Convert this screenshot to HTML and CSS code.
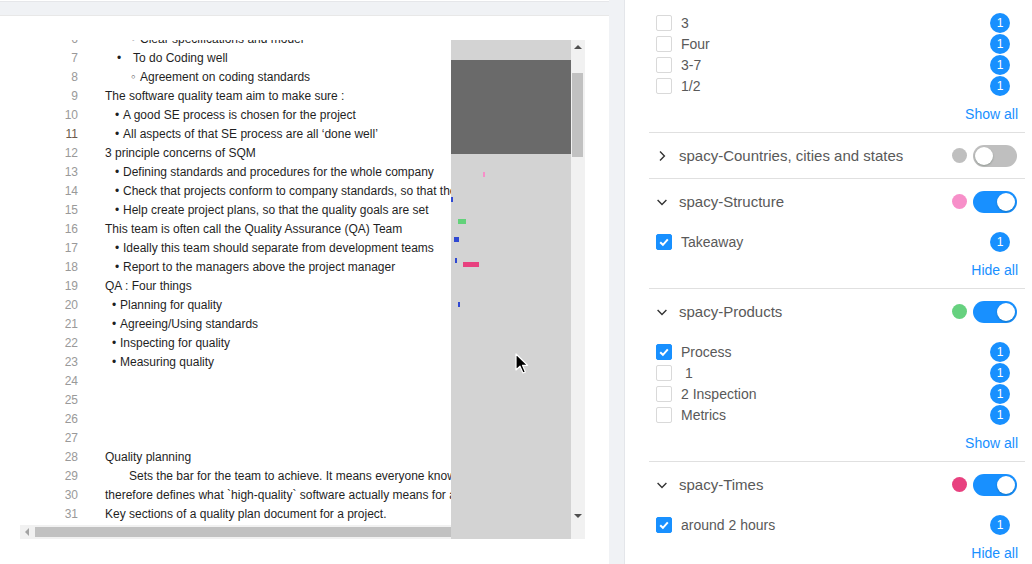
FILE: index.html
```html
<!DOCTYPE html>
<html lang="en">
<head>
<meta charset="utf-8">
<title>Annotation editor</title>
<link rel="stylesheet" href="styles.css">
</head>
<body>
<div class="page">
  <div class="left">
    <div class="topcard"></div>
    <div class="card">
      <div class="editor">
        <div class="code">
          <div class="lines">
            <div class="ln"><span class="no">6</span><span class="tx in-c"><span class="bl circ">◦</span>Clear specifications and model</span></div>
            <div class="ln"><span class="no">7</span><span class="tx in-a"><span class="bl wide">•</span>To do Coding well</span></div>
            <div class="ln"><span class="no">8</span><span class="tx in-c"><span class="bl circ">◦</span>Agreement on coding standards</span></div>
            <div class="ln"><span class="no">9</span><span class="tx">The software quality team aim to make sure :</span></div>
            <div class="ln"><span class="no">10</span><span class="tx in-b"><span class="bl">•</span>A good SE process is chosen for the project</span></div>
            <div class="ln"><span class="no active">11</span><span class="tx in-b"><span class="bl">•</span>All aspects of that SE process are all ‘done well’</span></div>
            <div class="ln"><span class="no">12</span><span class="tx">3 principle concerns of SQM</span></div>
            <div class="ln"><span class="no">13</span><span class="tx in-b"><span class="bl">•</span>Defining standards and procedures for the whole company</span></div>
            <div class="ln"><span class="no">14</span><span class="tx in-b"><span class="bl">•</span>Check that projects conform to company standards, so that the quality is consistent</span></div>
            <div class="ln"><span class="no">15</span><span class="tx in-b"><span class="bl">•</span>Help create project plans, so that the quality goals are set</span></div>
            <div class="ln"><span class="no">16</span><span class="tx">This team is often call the Quality Assurance (QA) Team</span></div>
            <div class="ln"><span class="no">17</span><span class="tx in-b"><span class="bl">•</span>Ideally this team should separate from development teams</span></div>
            <div class="ln"><span class="no">18</span><span class="tx in-b"><span class="bl">•</span>Report to the managers above the project manager</span></div>
            <div class="ln"><span class="no">19</span><span class="tx">QA : Four things</span></div>
            <div class="ln"><span class="no">20</span><span class="tx in-d"><span class="bl">•</span>Planning for quality</span></div>
            <div class="ln"><span class="no">21</span><span class="tx in-d"><span class="bl">•</span>Agreeing/Using standards</span></div>
            <div class="ln"><span class="no">22</span><span class="tx in-d"><span class="bl">•</span>Inspecting for quality</span></div>
            <div class="ln"><span class="no">23</span><span class="tx in-d"><span class="bl">•</span>Measuring quality</span></div>
            <div class="ln"><span class="no">24</span><span class="tx"></span></div>
            <div class="ln"><span class="no">25</span><span class="tx"></span></div>
            <div class="ln"><span class="no">26</span><span class="tx"></span></div>
            <div class="ln"><span class="no">27</span><span class="tx"></span></div>
            <div class="ln"><span class="no">28</span><span class="tx">Quality planning</span></div>
            <div class="ln"><span class="no">29</span><span class="tx in-e">Sets the bar for the team to achieve. It means everyone knows what quality means and</span></div>
            <div class="ln"><span class="no">30</span><span class="tx">therefore defines what `high-quality` software actually means for a project.</span></div>
            <div class="ln"><span class="no">31</span><span class="tx">Key sections of a quality plan document for a project.</span></div>
            <div class="ln"><span class="no">32</span><span class="tx"></span></div>
          </div>
        </div>
        <div class="minimap">
          <div class="mm-view"></div>
          <span class="mark pink" style="left:32px;top:132px;width:2px;height:5px"></span>
          <span class="mark blue" style="left:0px;top:157px;width:2px;height:5px"></span>
          <span class="mark green" style="left:7px;top:179px;width:8px;height:5px"></span>
          <span class="mark blue" style="left:3px;top:197px;width:5px;height:5px"></span>
          <span class="mark blue" style="left:4px;top:218px;width:2px;height:5px"></span>
          <span class="mark red" style="left:12px;top:222px;width:16px;height:5px"></span>
          <span class="mark blue" style="left:7px;top:262px;width:2px;height:5px"></span>
        </div>
        <div class="vscroll">
          <span class="arr-box"><span class="arr up"></span></span>
          <div class="vthumb"></div>
          <span class="arr-box bottom"><span class="arr down"></span></span>
        </div>
        <div class="hscroll">
          <span class="arr-box h"><span class="arr lft"></span></span>
          <div class="hthumb"></div>
        </div>
        <div class="corner"></div>
      </div>
      <svg class="pointer" width="14" height="22" viewBox="0 0 14 22"><path d="M1 1 L1 17 L5 13.2 L8 20 L10.4 19 L7.5 12.3 L12.6 12.3 Z" fill="#000" stroke="#fff" stroke-width="1.2" stroke-linejoin="round"/></svg>
    </div>
  </div>

  <aside class="panel">
    <section class="facet">
      <ul class="items">
        <li class="item"><span class="cb"></span><span class="lbl">3</span><span class="badge">1</span></li>
        <li class="item"><span class="cb"></span><span class="lbl">Four</span><span class="badge">1</span></li>
        <li class="item"><span class="cb"></span><span class="lbl">3-7</span><span class="badge">1</span></li>
        <li class="item"><span class="cb"></span><span class="lbl">1/2</span><span class="badge">1</span></li>
      </ul>
      <div class="more">Show all</div>
    </section>

    <section class="facet">
      <div class="fhead">
        <svg class="chev" width="12" height="12" viewBox="0 0 12 12"><path d="M4 1.6 L8.4 6 L4 10.4" fill="none" stroke="#333" stroke-width="1.4"/></svg>
        <span class="ftitle">spacy-Countries, cities and states</span>
        <span class="dot c-gray"></span>
        <span class="tog off"><i></i></span>
      </div>
    </section>

    <section class="facet">
      <div class="fhead">
        <svg class="chev" width="12" height="12" viewBox="0 0 12 12"><path d="M1.6 4 L6 8.4 L10.4 4" fill="none" stroke="#333" stroke-width="1.4"/></svg>
        <span class="ftitle">spacy-Structure</span>
        <span class="dot c-pink"></span>
        <span class="tog on"><i></i></span>
      </div>
      <ul class="items">
        <li class="item"><span class="cb on"><svg width="14" height="14" viewBox="0 0 14 14"><path d="M3.2 7.2 L5.9 9.8 L10.8 4.4" fill="none" stroke="#fff" stroke-width="2"/></svg></span><span class="lbl">Takeaway</span><span class="badge">1</span></li>
      </ul>
      <div class="more">Hide all</div>
    </section>

    <section class="facet">
      <div class="fhead">
        <svg class="chev" width="12" height="12" viewBox="0 0 12 12"><path d="M1.6 4 L6 8.4 L10.4 4" fill="none" stroke="#333" stroke-width="1.4"/></svg>
        <span class="ftitle">spacy-Products</span>
        <span class="dot c-green"></span>
        <span class="tog on"><i></i></span>
      </div>
      <ul class="items">
        <li class="item"><span class="cb on"><svg width="14" height="14" viewBox="0 0 14 14"><path d="M3.2 7.2 L5.9 9.8 L10.8 4.4" fill="none" stroke="#fff" stroke-width="2"/></svg></span><span class="lbl">Process</span><span class="badge">1</span></li>
        <li class="item"><span class="cb"></span><span class="lbl">&nbsp;1</span><span class="badge">1</span></li>
        <li class="item"><span class="cb"></span><span class="lbl">2 Inspection</span><span class="badge">1</span></li>
        <li class="item"><span class="cb"></span><span class="lbl">Metrics</span><span class="badge">1</span></li>
      </ul>
      <div class="more">Show all</div>
    </section>

    <section class="facet">
      <div class="fhead">
        <svg class="chev" width="12" height="12" viewBox="0 0 12 12"><path d="M1.6 4 L6 8.4 L10.4 4" fill="none" stroke="#333" stroke-width="1.4"/></svg>
        <span class="ftitle">spacy-Times</span>
        <span class="dot c-red"></span>
        <span class="tog on"><i></i></span>
      </div>
      <ul class="items">
        <li class="item"><span class="cb on"><svg width="14" height="14" viewBox="0 0 14 14"><path d="M3.2 7.2 L5.9 9.8 L10.8 4.4" fill="none" stroke="#fff" stroke-width="2"/></svg></span><span class="lbl">around 2 hours</span><span class="badge">1</span></li>
      </ul>
      <div class="more">Hide all</div>
    </section>
  </aside>
</div>
</body>
</html>
```

FILE: styles.css
```css
* { box-sizing: border-box; }
html, body { margin: 0; padding: 0; }
body {
  background: #f0f2f5;
  font-family: "Liberation Sans", Arial, sans-serif;
  width: 1032px;
  height: 564px;
  overflow: hidden;
}
.page {
  display: flex;
  height: 564px;
}
.left {
  width: 609px;
  margin-right: 15px;
  display: flex;
  flex-direction: column;
}
.topcard {
  height: 2px;
  background: #fff;
  border-bottom: 1px solid #e6e7ea;
  margin-bottom: 13px;
}
.card {
  flex: 1;
  background: #fff;
  border-top: 1px solid #e8e8e8;
  padding: 24px 0 0 20px;
  position: relative;
}
.editor {
  display: grid;
  grid-template-columns: 431px 120px 14px;
  grid-template-rows: 485px 14px;
  width: 565px;
}
.code {
  grid-column: 1;
  grid-row: 1;
  overflow: hidden;
  background: #fff;
}
.lines {
  margin-top: -10px;
  font-size: 12px;
  line-height: 19px;
  color: #1f1f1f;
}
.ln {
  display: flex;
  height: 19px;
  white-space: pre;
}
.no {
  width: 58px;
  flex: none;
  text-align: right;
  color: #999;
}
.no.active { color: #6b5b4b; }
.tx { margin-left: 27px; }
.in-a { padding-left: 12px; }
.in-b { padding-left: 10px; }
.in-c { padding-left: 25px; }
.in-d { padding-left: 7px; }
.in-e { padding-left: 24px; }
.bl {
  display: inline-block;
  width: 8px;
}
.bl.wide { width: 16px; }
.bl.circ {
  width: 10px;
  font-size: 11px;
  font-family: "DejaVu Sans", sans-serif;
  color: #111;
}

.minimap {
  grid-column: 2;
  grid-row: 1 / span 2;
  background: #d3d3d3;
  position: relative;
}
.mm-view {
  margin-top: 20px;
  height: 94px;
  background: #6a6a6a;
}
.mark { position: absolute; display: block; }
.mark.pink { background: #f78fc9; }
.mark.blue { background: #2f48d2; }
.mark.green { background: #62d27a; }
.mark.red { background: #e8417f; }

.vscroll {
  grid-column: 3;
  grid-row: 1;
  background: #f1f1f1;
  display: flex;
  flex-direction: column;
}
.arr-box {
  height: 14px;
  width: 14px;
  display: flex;
  align-items: center;
  justify-content: center;
  flex: none;
}
.arr-box.bottom { margin-top: auto; margin-bottom: 2px; }
.arr { width: 0; height: 0; display: block; }
.arr.up {
  border-left: 4px solid transparent;
  border-right: 4px solid transparent;
  border-bottom: 4px solid #505050;
}
.arr.down {
  border-left: 4px solid transparent;
  border-right: 4px solid transparent;
  border-top: 4px solid #505050;
}
.arr.lft {
  border-top: 4px solid transparent;
  border-bottom: 4px solid transparent;
  border-right: 4px solid #a3a3a3;
}
.vthumb {
  margin: 19px 0 0 1px;
  width: 11px;
  height: 84px;
  background: #c1c1c1;
}
.hscroll {
  grid-column: 1;
  grid-row: 2;
  background: #f1f1f1;
  display: flex;
  align-items: center;
}
.hthumb {
  flex: 1;
  height: 10px;
  margin-left: 1px;
  background: #c1c1c1;
}
.corner {
  grid-column: 3;
  grid-row: 2;
  background: #f1f1f1;
}
.pointer {
  position: absolute;
  left: 515px;
  top: 337px;
}

/* right panel */
.panel {
  flex: 1;
  background: #fff;
  border-left: 1px solid #e4e6ea;
  padding: 12px 7px 0 24px;
  color: #595959;
  overflow: hidden;
}
.facet {
  border-bottom: 1px solid #e0e0e0;
}
.facet:last-child { border-bottom: none; }
.items {
  list-style: none;
  margin: 0;
  padding: 0;
}
.fhead + .items { margin-top: 7px; }
.item {
  height: 21px;
  display: flex;
  align-items: center;
  padding: 0 15px 0 7px;
  font-size: 14px;
}
.cb {
  width: 16px;
  height: 16px;
  border: 1px solid #d9d9d9;
  border-radius: 2px;
  margin-right: 9px;
  flex: none;
  background: #fff;
  display: flex;
  align-items: center;
  justify-content: center;
}
.cb.on {
  background: #1890ff;
  border-color: #1890ff;
}
.lbl { flex: 1; white-space: pre; }
.badge {
  width: 20px;
  height: 20px;
  border-radius: 50%;
  background: #1890ff;
  color: #fff;
  font-size: 12px;
  line-height: 20px;
  text-align: center;
  flex: none;
}
.more {
  margin-top: 7px;
  margin-bottom: 7px;
  height: 22px;
  line-height: 22px;
  text-align: right;
  padding-right: 7px;
  font-size: 14px;
  color: #1890ff;
}
.fhead {
  height: 45px;
  display: flex;
  align-items: center;
  padding: 0 8px 0 7px;
}
.chev { flex: none; margin-right: 11px; }
.ftitle {
  flex: 1;
  font-size: 15px;
  color: #595959;
}
.dot {
  width: 15px;
  height: 15px;
  border-radius: 50%;
  margin-right: 6px;
  flex: none;
}
.c-gray { background: #bfbfbf; }
.c-pink { background: #f78fc9; }
.c-green { background: #66d17f; }
.c-red { background: #e8417f; }
.tog {
  width: 44px;
  height: 22px;
  border-radius: 11px;
  display: flex;
  align-items: center;
  padding: 0 2px;
  flex: none;
}
.tog i {
  display: block;
  width: 18px;
  height: 18px;
  border-radius: 50%;
  background: #fff;
  box-shadow: 0 1px 2px rgba(0, 35, 11, 0.25);
}
.tog.off { background: #bfbfbf; justify-content: flex-start; }
.tog.on { background: #1890ff; justify-content: flex-end; }
```
